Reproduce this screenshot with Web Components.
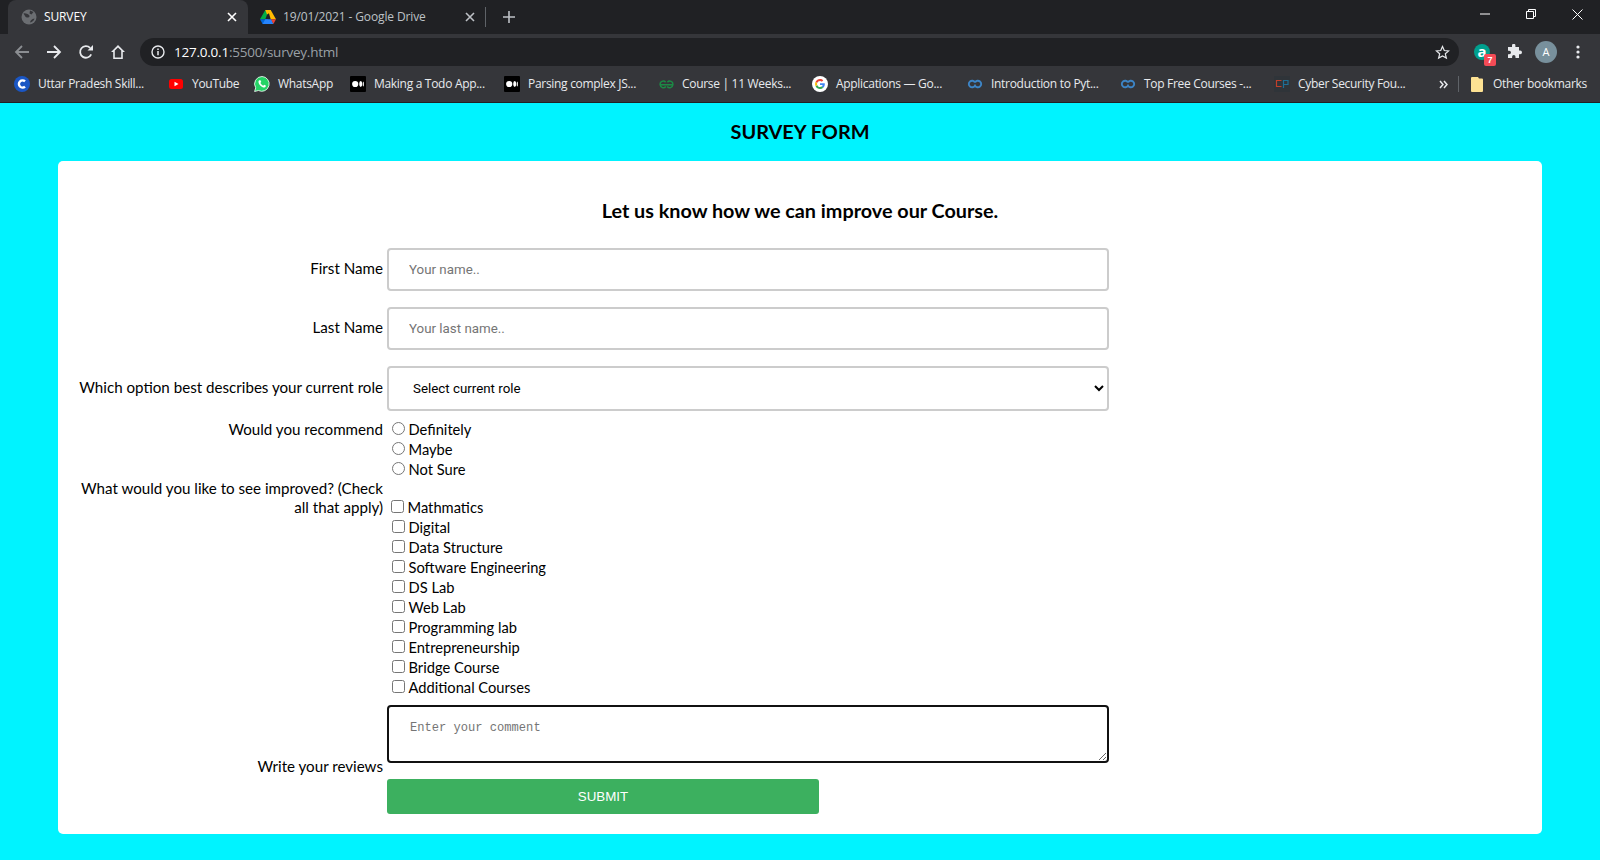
<!DOCTYPE html>
<html>
<head>
<meta charset="utf-8">
<title>SURVEY</title>
<style>
  html, body { margin: 0; padding: 0; height: 860px; overflow: hidden; background: #00f3ff; }
</style>
</head>
<body>
<browser-chrome></browser-chrome>
<survey-page>
  <form-row label="First Name"><text-field placeholder="Your name.."></text-field></form-row>
  <form-row label="Last Name" gap="16"><text-field placeholder="Your last name.."></text-field></form-row>
  <form-row label="Which option best describes your current role" gap="16"><role-select></role-select></form-row>
  <form-row label="Would you recommend" gap="8" align="start" nudge="1">
    <choice-list type="radio" items='["Definitely","Maybe","Not Sure"]'></choice-list>
  </form-row>
  <form-row label="What would you like to see improved? (Check|all that apply)" align="start">
    <choice-list type="checkbox" offset="18" items='["Mathmatics","Digital","Data Structure","Software Engineering","DS Lab","Web Lab","Programming lab","Entrepreneurship","Bridge Course","Additional Courses"]'></choice-list>
  </form-row>
  <form-row label="Write your reviews" gap="8" align="end" lift="1"><review-box></review-box></form-row>
  <form-row gap="2"><submit-button>SUBMIT</submit-button></form-row>
</survey-page>

<script>
const ICONS = {
  globe: '<svg width="16" height="16" viewBox="0 0 16 16"><circle cx="8" cy="8" r="7.5" fill="#6b6e72"/><path d="M2.500 4.500c2 -.5 4 .5 5.500 1.500 1 1 .5 2.500-1 2.500s-2.500-.5-3-1.500zM9 13.500c.5-2 1.500-3.500 4.500-4-.5 2-2 3.500-4.500 4zM9 1.500l3.500 1.500-2 2.500-2-1z" fill="#35363a"/></svg>',
  drive: '<svg width="16" height="14" viewBox="0 0 16 14"><path d="M5.300 0h3.400L5.300 9.200H0z" fill="#00ac47"/><path d="M5.300 0h5.400l-2 3.400-1.700 1z" fill="#ffba00"/><path d="M8 0h2.700L16 9.200h-5.300z" fill="#ffba00"/><path d="M0 9.200h8L5.300 14H2.600z" fill="#0066da"/><path d="M5.300 9.200h6L13.400 14H2.600z" fill="#2684fc"/><path d="M11 9.200h5L13.400 14z" fill="#ea4335"/></svg>',
  close: '<svg width="10" height="10" viewBox="0 0 10 10"><path d="M1 1l8 8M9 1l-8 8" stroke="currentColor" stroke-width="1.6" fill="none"/></svg>',
  plus: '<svg width="12" height="12" viewBox="0 0 12 12"><path d="M6 0v12M0 6h12" stroke="currentColor" stroke-width="1.6" fill="none"/></svg>',
  back: '<svg width="16" height="16" viewBox="0 0 16 16"><path d="M15 8H2M8 2L2 8l6 6" stroke="currentColor" stroke-width="1.8" fill="none"/></svg>',
  forward: '<svg width="16" height="16" viewBox="0 0 16 16"><path d="M1 8h13M8 2l6 6-6 6" stroke="currentColor" stroke-width="1.8" fill="none"/></svg>',
  reload: '<svg width="16" height="16" viewBox="0 0 16 16"><path d="M13.200 10.400A5.800 5.800 0 1 1 12.100 3.900" stroke="currentColor" stroke-width="1.800" fill="none"/><path d="M9.500 6.500H15V1z" fill="currentColor"/></svg>',
  home: '<svg width="16" height="16" viewBox="0 0 16 16"><path d="M8 1L1 8h2.200v7h9.600V8H15zM8 3.400l3.200 3.200v6.900H4.800V6.600z" fill="currentColor" fill-rule="evenodd"/></svg>',
  info: '<svg width="14" height="14" viewBox="0 0 14 14"><circle cx="7" cy="7" r="6" stroke="currentColor" stroke-width="1.400" fill="none"/><path d="M7 6v4.200M7 3.500v1.500" stroke="currentColor" stroke-width="1.500" fill="none"/></svg>',
  star: '<svg width="15" height="15" viewBox="0 0 16 16"><path d="M8 1.600l1.900 4.300 4.700.4-3.600 3.100 1.100 4.600L8 11.600l-4.100 2.400L5 9.400 1.400 6.300l4.700-.4z" stroke="currentColor" stroke-width="1.300" fill="none"/></svg>',
  puzzle: '<svg width="16" height="16" viewBox="0 0 16 16"><path d="M6 1.500a1.700 1.700 0 0 1 3.400 0V3h3.600v3.600h1.200a1.800 1.800 0 0 1 0 3.600H13V14H9.500v-1.300a1.700 1.700 0 0 0-3.400 0V14H2v-3.700h1.200a1.800 1.800 0 0 0 0-3.600H2V3h4z" fill="currentColor"/></svg>',
  dots: '<svg width="4" height="14" viewBox="0 0 4 14"><circle cx="2" cy="2" r="1.600" fill="currentColor"/><circle cx="2" cy="7" r="1.600" fill="currentColor"/><circle cx="2" cy="12" r="1.600" fill="currentColor"/></svg>',
  chevrons: '<svg width="9" height="9" viewBox="0 0 9 9"><path d="M1 1l3 3.500-3 3.500M5 1l3 3.500-3 3.500" stroke="currentColor" stroke-width="1.500" fill="none"/></svg>',
  folder: '<svg width="12" height="15" viewBox="0 0 12 15"><path d="M0 1a1 1 0 0 1 1-1h6l1 1.500h3a1 1 0 0 1 1 1V14a1 1 0 0 1-1 1H1a1 1 0 0 1-1-1z" fill="#fde293"/></svg>',
  coursera: '<svg width="16" height="16" viewBox="0 0 16 16"><circle cx="8" cy="8" r="8" fill="#1a56c4"/><path d="M11 5.400A3.600 3.600 0 1 0 11 10.600" stroke="#fff" stroke-width="2.400" fill="none"/></svg>',
  youtube: '<svg width="14" height="10" viewBox="0 0 14 10"><rect width="14" height="10" rx="2.500" fill="#f00"/><path d="M5.500 2.800L9.500 5l-4 2.200z" fill="#fff"/></svg>',
  whatsapp: '<svg width="16" height="16" viewBox="0 0 16 16"><path d="M8 .5A7.400 7.400 0 0 0 1.700 11.800L.6 15.500l3.800-1A7.400 7.400 0 1 0 8 .5z" fill="#25d366" stroke="#fff" stroke-width=".8"/><path d="M5.400 4.200c-.6.400-1 1.100-.9 2 .3 2.300 2.800 4.800 5.200 5.200.9.100 1.700-.4 2-1 .1-.3.100-.6.100-.8l-1.700-.9-.8 1c-1.300-.5-2.400-1.600-2.900-2.900l.9-.8-.8-1.800z" fill="#fff"/></svg>',
  medium: '<svg width="16" height="16" viewBox="0 0 16 16"><rect width="16" height="16" rx="1" fill="#000"/><circle cx="5.200" cy="8" r="3.100" fill="#fff"/><ellipse cx="10.700" cy="8" rx="1.500" ry="2.900" fill="#fff"/><ellipse cx="13.300" cy="8" rx=".6" ry="2.600" fill="#fff"/></svg>',
  gfg: '<svg width="15" height="9" viewBox="0 0 15 9"><path d="M7.500 4.800H1.200a3.100 3.100 0 0 1 5.400-2.600M7.500 4.800h6.300a3.100 3.100 0 0 0-5.400-2.600M1.200 4.800a3.100 3.100 0 0 0 5.600 1.700M13.800 4.800a3.100 3.100 0 0 1-5.600 1.700" stroke="#1c8a45" stroke-width="1.500" fill="none"/></svg>',
  google: '<svg width="16" height="16" viewBox="0 0 16 16"><circle cx="8" cy="8" r="8" fill="#fff"/><path d="M12.800 8.200c0-.4 0-.7-.1-1H8v1.900h2.700c-.1.600-.5 1.100-1 1.500l1.600 1.200c.9-.9 1.500-2.100 1.500-3.600z" fill="#4285f4"/><path d="M8 13c1.300 0 2.400-.4 3.300-1.200l-1.600-1.200c-.4.300-1 .5-1.700.5-1.300 0-2.400-.9-2.800-2.100L3.600 10.200C4.400 11.900 6.100 13 8 13z" fill="#34a853"/><path d="M5.200 9c-.2-.6-.2-1.300 0-1.900L3.600 5.800c-.7 1.400-.7 3 0 4.400z" fill="#fbbc05"/><path d="M8 5c.7 0 1.400.3 1.900.7l1.400-1.400C10.400 3.500 9.300 3 8 3 6.100 3 4.400 4.100 3.600 5.800l1.600 1.300C5.600 5.900 6.700 5 8 5z" fill="#ea4335"/></svg>',
  loop: '<svg width="16" height="10" viewBox="0 0 16 10"><path d="M8 3.400A3.300 3.300 0 1 0 8 6.600A3.300 3.300 0 1 0 8 3.400" stroke="#3d85c6" stroke-width="1.900" fill="none"/></svg>',
  cp: '<svg width="16" height="16" viewBox="0 0 16 16"><rect width="16" height="16" fill="#2f3439"/><path d="M7.500 4.500H2.500v6h5" stroke="#c0402b" stroke-width="1.200" fill="none"/><path d="M9.500 12V4.500h4.500v4H9.500" stroke="#1e6f96" stroke-width="1.200" fill="none"/></svg>'
};

const UI_FONT = '"Open Sans", "Noto Sans", sans-serif';

class ChromeTab extends HTMLElement {
  connectedCallback() {
    const active = this.hasAttribute('active');
    this.attachShadow({ mode: 'open' }).innerHTML = `
      <style>
        :host {
          display: flex;
          align-items: center;
          box-sizing: border-box;
          height: 34px;
          width: ${this.getAttribute('width')}px;
          padding-left: ${this.getAttribute('pad')}px;
          font: 12px ${UI_FONT};
          letter-spacing: -.12px;
          color: ${active ? '#fff' : '#bdc1c6'};
          background: ${active ? '#35363a' : 'transparent'};
          border-radius: 8px 8px 0 0;
        }
        .icon { display: flex; width: ${this.getAttribute('text-at')}px; flex: none; }
        .title { flex: 1; white-space: nowrap; padding-bottom: 2px; }
        .close { display: flex; color: ${active ? '#fff' : '#bdc1c6'}; margin-right: ${this.getAttribute('close-right')}px; }
      </style>
      <span class="icon">${ICONS[this.getAttribute('icon')]}</span>
      <span class="title"><slot></slot></span>
      <span class="close">${ICONS.close}</span>`;
  }
}
customElements.define('chrome-tab', ChromeTab);

class ToolButton extends HTMLElement {
  connectedCallback() {
    this.attachShadow({ mode: 'open' }).innerHTML = `
      <style>
        :host {
          display: flex;
          align-items: center;
          justify-content: center;
          flex: none;
          position: relative;
          width: 32px;
          height: 36px;
          color: ${this.getAttribute('color') || '#e8eaed'};
        }
      </style>
      ${ICONS[this.getAttribute('icon')] || ''}<slot></slot>`;
  }
}
customElements.define('tool-button', ToolButton);

class BookmarkItem extends HTMLElement {
  connectedCallback() {
    this.attachShadow({ mode: 'open' }).innerHTML = `
      <style>
        :host {
          display: flex;
          align-items: center;
          flex: none;
          box-sizing: border-box;
          width: ${this.getAttribute('width')}px;
          font: 12px ${UI_FONT};
          letter-spacing: -.3px;
          color: #e8eaed;
          white-space: nowrap;
        }
        .icon { display: flex; align-items: center; justify-content: center; flex: none; width: 16px; margin-right: 8px; }
        .text { padding-bottom: 2px; }
      </style>
      <span class="icon">${ICONS[this.getAttribute('icon')]}</span><span class="text"><slot></slot></span>`;
  }
}
customElements.define('bookmark-item', BookmarkItem);

class BrowserChrome extends HTMLElement {
  connectedCallback() {
    const marks = [
      ['coursera', 154, 'Uttar Pradesh Skill...'],
      ['youtube', 86, 'YouTube'],
      ['whatsapp', 96, 'WhatsApp'],
      ['medium', 154, 'Making a Todo App...'],
      ['medium', 154, 'Parsing complex JS...'],
      ['gfg', 154, 'Course | 11 Weeks...'],
      ['google', 155, 'Applications — Go...'],
      ['loop', 153, 'Introduction to Pyt...'],
      ['loop', 154, 'Top Free Courses -...'],
      ['cp', 165, 'Cyber Security Fou...']
    ];
    this.attachShadow({ mode: 'open' }).innerHTML = `
      <style>
        :host { display: block; background: #35363a; border-bottom: 1px solid #202124; }
        .strip { display: flex; height: 34px; background: #202124; padding-left: 8px; color: #e8eaed; }
        .sep { width: 1px; height: 20px; background: #5f6368; margin-top: 7px; flex: none; }
        .plus { display: flex; align-items: center; justify-content: center; width: 46px; flex: none; color: #bdc1c6; }
        .win { display: flex; margin-left: auto; }
        .win span { display: flex; align-items: center; justify-content: center; width: 46px; height: 28px; color: #fff; }
        .toolbar { display: flex; align-items: center; height: 36px; padding: 0 6px; }
        .omni {
          flex: 1;
          display: flex;
          align-items: center;
          height: 28px;
          margin: 0 7px 0 6px;
          padding: 0 9px 0 11px;
          border-radius: 14px;
          background: #202124;
          color: #e8eaed;
          font: 13.5px ${UI_FONT};
          letter-spacing: -.23px;
        }
        .omni .info { display: flex; margin-right: 9px; }
        .omni .host { color: #fff; }
        .omni .rest { color: #9aa0a6; flex: 1; }
        .omni .star { display: flex; color: #e8eaed; }
        .badge {
          position: absolute;
          left: 18px;
          top: 20px;
          width: 12px;
          height: 12px;
          border-radius: 2px;
          background: #f44b56;
          color: #fff;
          font: bold 9px/12px "Liberation Sans", sans-serif;
          text-align: center;
        }
        .avatar {
          width: 22px;
          height: 22px;
          border-radius: 50%;
          background: #78909c;
          color: #fff;
          font: 11px/22px ${UI_FONT};
          text-align: center;
        }
        .ext {
          width: 16px;
          height: 16px;
          border-radius: 50%;
          background: #00a08e;
          color: #fff;
          font: bold 15px/14px ${UI_FONT};
          text-align: center;
        }
        .marks { display: flex; align-items: center; height: 28px; padding: 0 0 4px 14px; }
        .more { display: flex; width: 19px; color: #e8eaed; flex: none; }
        .bar { width: 1px; height: 16px; background: #5f6368; margin-right: 10px; flex: none; }
      </style>
      <div class="strip">
        <chrome-tab active icon="globe" width="240" pad="13" text-at="23" close-right="11">SURVEY</chrome-tab>
        <chrome-tab icon="drive" width="237" pad="12" text-at="23" close-right="10">19/01/2021 - Google Drive</chrome-tab>
        <div class="sep"></div>
        <div class="plus">${ICONS.plus}</div>
        <div class="win">
          <span><svg width="10" height="10" viewBox="0 0 10 10"><path d="M0 5h10" stroke="currentColor"/></svg></span>
          <span><svg width="10" height="10" viewBox="0 0 10 10"><path d="M.5 2.500h7v7h-7zM2.500 2.500v-2h7v7h-2" stroke="currentColor" fill="none"/></svg></span>
          <span><svg width="11" height="11" viewBox="0 0 11 11"><path d="M.5.5l10 10M10.500.5l-10 10" stroke="currentColor" fill="none"/></svg></span>
        </div>
      </div>
      <div class="toolbar">
        <tool-button icon="back" color="#8b8e92"></tool-button>
        <tool-button icon="forward"></tool-button>
        <tool-button icon="reload"></tool-button>
        <tool-button icon="home"></tool-button>
        <div class="omni">
          <span class="info">${ICONS.info}</span>
          <span class="host">127.0.0.1</span><span class="rest">:5500/survey.html</span>
          <span class="star">${ICONS.star}</span>
        </div>
        <tool-button><span class="ext">a</span><span class="badge">7</span></tool-button>
        <tool-button icon="puzzle"></tool-button>
        <tool-button><span class="avatar">A</span></tool-button>
        <tool-button icon="dots"></tool-button>
      </div>
      <div class="marks">
        ${marks.map(m => `<bookmark-item icon="${m[0]}" width="${m[1]}">${m[2]}</bookmark-item>`).join('')}
        <span class="more">${ICONS.chevrons}</span>
        <span class="bar"></span>
        <bookmark-item icon="folder" width="121">Other bookmarks</bookmark-item>
      </div>`;
  }
}
customElements.define('browser-chrome', BrowserChrome);

class SurveyPage extends HTMLElement {
  constructor() {
    super();
    this.attachShadow({ mode: 'open' }).innerHTML = `
      <style>
        :host { display: block; font-family: Lato, "Open Sans", sans-serif; color: #000; }
        h1 { margin: 0; height: 58px; font-size: 19.9px; font-weight: 700; line-height: 57px; text-align: center; }
        .card {
          margin: 0 58px;
          padding: 34px 20px 20px;
          background: #fff;
          border-radius: 5px;
        }
        h2 { margin: 0 0 21px; font-size: 19.8px; font-weight: 700; line-height: 31px; padding-bottom: 1px; text-align: center; }
      </style>
      <h1>SURVEY FORM</h1>
      <div class="card">
        <h2>Let us know how we can improve our Course.</h2>
        <slot></slot>
      </div>`;
  }
}
customElements.define('survey-page', SurveyPage);

class FormRow extends HTMLElement {
  connectedCallback() {
    const label = (this.getAttribute('label') || '').split('|').join('<br>');
    const kind = this.getAttribute('align');
    const align = { start: 'flex-start', end: 'flex-end' }[kind] || 'center';
    const below = this.hasAttribute('lift') ? this.getAttribute('lift') : (kind === 'start' ? 0 : 3);
    this.attachShadow({ mode: 'open' }).innerHTML = `
      <style>
        :host {
          display: flex;
          align-items: ${align};
          margin-top: ${this.getAttribute('gap') || 0}px;
        }
        .label {
          flex: none;
          width: 305px;
          margin-right: 4px;
          padding-top: ${this.getAttribute('nudge') || 0}px;
          padding-bottom: ${below}px;
          font-size: 15.15px;
          line-height: 19px;
          text-align: right;
          white-space: nowrap;
        }
      </style>
      <div class="label">${label}</div>
      <slot></slot>`;
  }
}
customElements.define('form-row', FormRow);

class TextField extends HTMLElement {
  connectedCallback() {
    this.attachShadow({ mode: 'open' }).innerHTML = `
      <style>
        :host { display: block; width: 722px; }
        input {
          display: block;
          box-sizing: border-box;
          width: 100%;
          height: 43px;
          padding: 0 20px;
          border: 2px solid #ccc;
          border-radius: 4px;
          outline: none;
          font: 13.33px Roboto, sans-serif;
        }
        input::placeholder { color: #757575; }
      </style>
      <input type="text" placeholder="${this.getAttribute('placeholder')}">`;
  }
}
customElements.define('text-field', TextField);

class RoleSelect extends HTMLElement {
  connectedCallback() {
    this.attachShadow({ mode: 'open' }).innerHTML = `
      <style>
        :host { display: block; width: 722px; }
        select {
          display: block;
          box-sizing: border-box;
          width: 100%;
          height: 45px;
          padding: 0 20px;
          border: 2px solid #ccc;
          border-radius: 4px;
          outline: none;
          background: #fff;
          color: #000;
          font: 13.33px Roboto, sans-serif;
        }
      </style>
      <select><option>Select current role</option></select>`;
  }
}
customElements.define('role-select', RoleSelect);

class ChoiceList extends HTMLElement {
  connectedCallback() {
    const type = this.getAttribute('type');
    const items = JSON.parse(this.getAttribute('items') || '[]');
    this.attachShadow({ mode: 'open' }).innerHTML = `
      <style>
        :host { display: block; padding-top: ${this.getAttribute('offset') || 0}px; font-size: 14.7px; }
        label { display: flex; align-items: flex-start; height: 20px; line-height: 20px; white-space: nowrap; }
        input { flex: none; width: 13px; height: 13px; margin: 3px 3.5px 0 5px; }
        label.first-check input { margin-left: 4px; }
      </style>
      ${items.map((text, i) => `
        <label class="${type === 'checkbox' && i === 0 ? 'first-check' : ''}"><input type="${type}" name="c${i}">${text}</label>
      `).join('')}`;
  }
}
customElements.define('choice-list', ChoiceList);

class ReviewBox extends HTMLElement {
  connectedCallback() {
    this.attachShadow({ mode: 'open' }).innerHTML = `
      <style>
        :host { display: block; width: 722px; height: 72px; }
        textarea {
          display: block;
          box-sizing: border-box;
          width: 100%;
          height: 58px;
          padding: 14px 21px;
          border: 2px solid #111;
          border-radius: 4px;
          outline: none;
          font: 12.1px "Liberation Mono", monospace;
        }
      </style>
      <textarea placeholder="Enter your comment"></textarea>`;
  }
}
customElements.define('review-box', ReviewBox);

class SubmitButton extends HTMLElement {
  constructor() {
    super();
    this.attachShadow({ mode: 'open' }).innerHTML = `
      <style>
        :host {
          display: block;
          width: 432px;
          height: 35px;
          border-radius: 3px;
          background: #3cb05f;
          color: #fff;
          font: 13.33px/35px "Liberation Sans", Arial, sans-serif;
          text-align: center;
        }
      </style>
      <slot></slot>`;
  }
}
customElements.define('submit-button', SubmitButton);
</script>
</body>
</html>
